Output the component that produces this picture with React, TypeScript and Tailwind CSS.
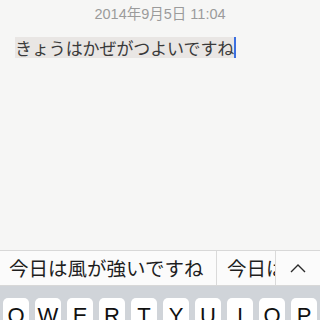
const jp = { fontFamily: '"Noto Sans CJK JP", "Noto Sans", sans-serif' }
const dateFont = { fontFamily: '"Liberation Sans", "Noto Sans CJK JP", sans-serif' }

const keys = ['Q', 'W', 'E', 'R', 'T', 'Y', 'U', 'I', 'O', 'P']

export default function App() {
  return (
    <div className="w-[320px] h-[320px] overflow-hidden flex flex-col bg-[#f6f6f5]">
      {/* note area */}
      <div className="h-[250px] shrink-0 flex flex-col">
        <div className="pt-[6px] text-center text-[14.5px] leading-[17px] text-[#9b9b9b]" style={dateFont}>
          2014年9月5日 11:04
        </div>
        <div className="mt-[14px] pl-[15px] flex items-center">
          <span className="bg-[#e9e6e4] text-[17px] leading-[21px] text-[#3a3a3a] tracking-[-0.1px]" style={jp}>
            きょうはかぜがつよいですね
          </span>
          <span className="w-[2px] h-[21px] bg-[#3b6fe0]" />
        </div>
      </div>

      {/* candidate bar */}
      <div className="h-[36px] shrink-0 flex items-center bg-[#fbfbfb] border-t border-b border-[#d8d8d8]" style={jp}>
        <div className="w-[217px] pl-[9px] text-[19.5px] leading-[34px] text-[#1e1e1e] whitespace-nowrap border-r border-[#dadada]">
          今日は風が強いですね
        </div>
        <div className="w-[59px] pl-[10px] text-[19.5px] leading-[34px] text-[#1e1e1e] whitespace-nowrap overflow-hidden border-r border-[#dadada]">
          今日は
        </div>
        <div className="flex-1 flex justify-center">
          <svg width="16" height="10" viewBox="0 0 16 10" fill="none" stroke="#2a2a2a" strokeWidth="1.4">
            <path d="M1 9 L8 2 L15 9" />
          </svg>
        </div>
      </div>

      {/* keyboard */}
      <div className="h-[34px] shrink-0 overflow-hidden bg-[#d0d4d9] pt-[12px] pl-[3px] flex gap-[6px]">
        {keys.map(k => (
          <div
            key={k}
            className="w-[26px] h-[40px] shrink-0 rounded-[5px] bg-white flex justify-center pt-[6px] text-[22px] leading-[24px] font-light text-[#111]"
            style={{ fontFamily: '"Liberation Sans", sans-serif' }}
          >
            {k}
          </div>
        ))}
      </div>
    </div>
  )
}
